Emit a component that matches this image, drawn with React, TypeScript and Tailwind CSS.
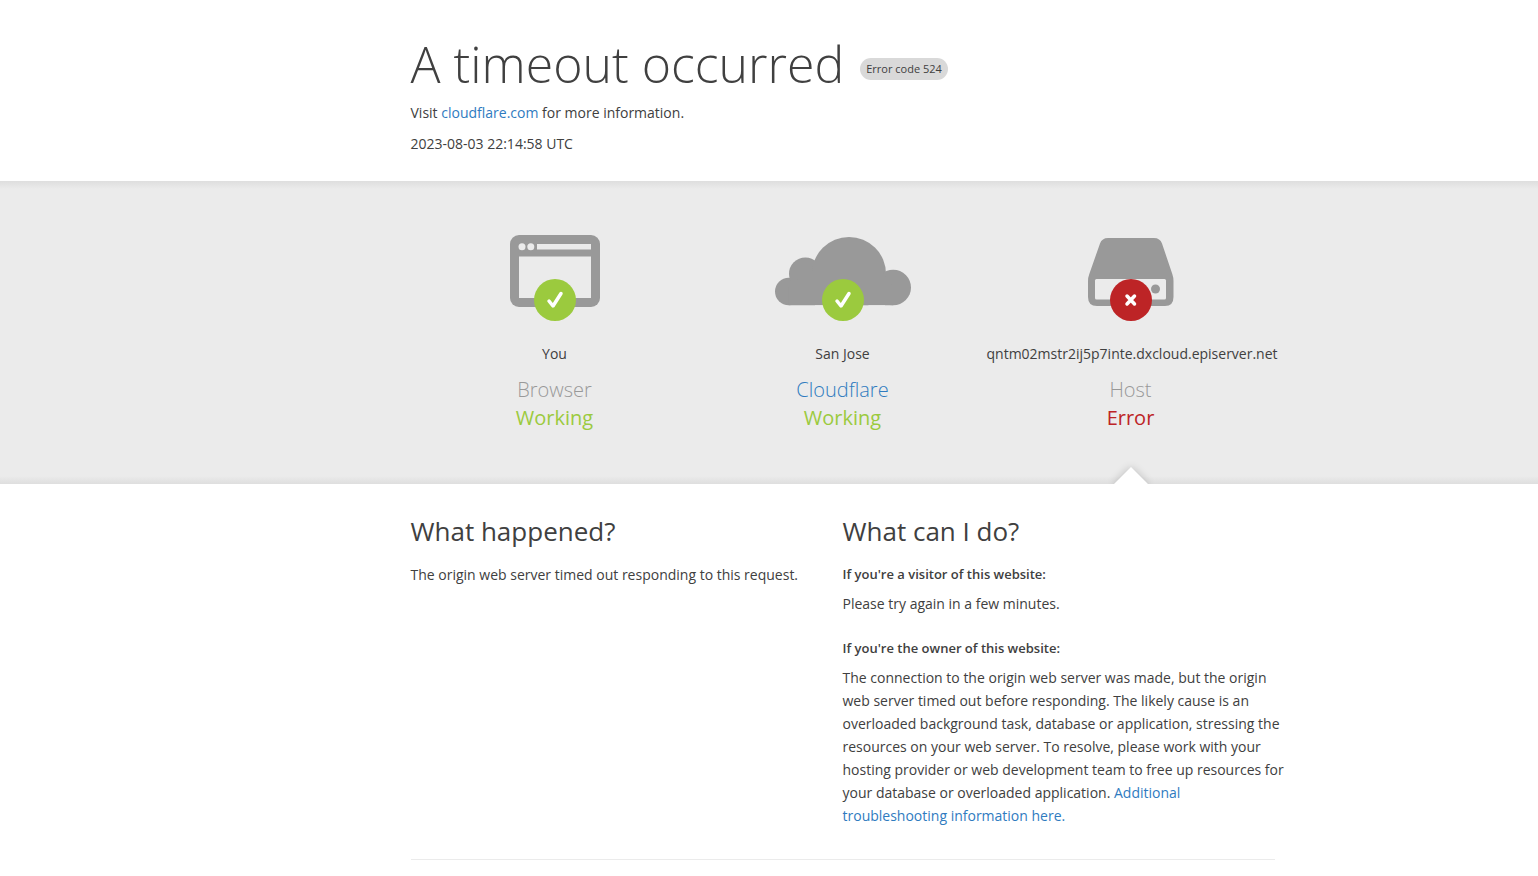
import type { ReactNode } from "react";
import { clsx } from "clsx";

function BrowserIcon() {
  return (
    <svg width="90" height="72" viewBox="0 0 90 72" aria-hidden="true">
      <rect width="90" height="72" rx="9" fill="#999" />
      <rect x="9" y="21.500" width="72" height="41.500" fill="#ebebeb" />
      <rect x="27" y="9" width="54" height="5.500" fill="#ebebeb" />
      <circle cx="12" cy="11.700" r="3.500" fill="#ebebeb" />
      <circle cx="20.800" cy="11.700" r="3.500" fill="#ebebeb" />
    </svg>
  );
}

function CloudIcon() {
  return (
    <svg width="136" height="70" viewBox="0 -1 136 70" fill="#999" aria-hidden="true">
      <circle cx="13.800" cy="54.500" r="13.800" />
      <circle cx="30.400" cy="36.800" r="16.400" />
      <circle cx="74" cy="37" r="37" />
      <circle cx="118.200" cy="50.500" r="17.800" />
      <path d="M13.800 68.300 V50 L30 36 H108 L118.200 50 V68.300 Z" />
      <rect x="40" y="68.300" width="70" height="10" fill="#ebebeb" />
    </svg>
  );
}

function HostIcon() {
  return (
    <svg width="86" height="70" viewBox="0 -2 86 70" aria-hidden="true">
      <path
        d="M20 0 H66 Q72 0 74 5.500 L84.300 36 Q85.500 39.500 85.500 43 V59 Q85.500 68 77 68 H9 Q0 68 0 59 V43 Q0 39.500 1.300 36 L12 5.500 Q14 0 20 0 Z"
        fill="#999"
      />
      <rect x="7" y="41" width="71" height="20.500" rx="1.500" fill="#ebebeb" />
      <circle cx="67.500" cy="51" r="4.500" fill="#999" />
    </svg>
  );
}

function StatusBadge({ ok }: { ok: boolean }) {
  return (
    <svg
      className="absolute left-1/2 -bottom-3.5 -translate-x-1/2"
      width="42"
      height="42"
      viewBox="0 0 42 42"
      aria-hidden="true"
    >
      <circle cx="21" cy="21" r="21" fill={ok ? "#9bca3e" : "#bd2426"} />
      {ok ? (
        <path d="M15 22 L19 27 L27 14.500" fill="none" stroke="#fff" strokeWidth="3.500" strokeLinecap="round" strokeLinejoin="round" />
      ) : (
        <path d="M17 17 L24.500 25 M24.500 17 L17 25" fill="none" stroke="#fff" strokeWidth="3.500" strokeLinecap="round" />
      )}
    </svg>
  );
}

type StatusProps = {
  icon: ReactNode;
  name: string;
  title: ReactNode;
  ok: boolean;
};

function Status({ icon, name, title, ok }: StatusProps) {
  return (
    <div className="relative text-center pt-[54px] pb-[52px]">
      <div className="relative h-[72px] mb-[35px] flex items-center justify-center">
        {icon}
        <StatusBadge ok={ok} />
      </div>
      <span className="block text-sm leading-6 whitespace-nowrap">{name}</span>
      <h3 className="mt-2.5 text-xl leading-7 font-light text-[#999]">{title}</h3>
      <span className={clsx("block text-xl leading-7", ok ? "text-[#9bca3e]" : "text-[#bd2426]")}>
        {ok ? "Working" : "Error"}
      </span>
      {/* Arrow pointing at the failing part */}
      {!ok && (
        <div className="absolute left-1/2 bottom-0 h-6 w-14 -translate-x-1/2 overflow-hidden">
          <div className="absolute left-1/2 top-3 size-6 -translate-x-1/2 rotate-45 bg-white shadow-[0_0_8px_rgba(0,0,0,0.2)]"></div>
        </div>
      )}
    </div>
  );
}

export default function App() {
  return (
    <div className="min-h-screen bg-white text-[#404040] text-sm font-['Open_Sans',sans-serif]">
      {/* Header */}
      <header className="lg:pl-[147px] pt-[34px] pb-[26px]">
        <div className="max-w-[864px] mx-auto">
          <div className="flex flex-wrap items-start gap-4">
            <h1 className="text-[50px] leading-[60px] font-light">A timeout occurred</h1>
            <span className="mt-6 rounded-full bg-[#d9d9d9] px-1.5 text-[11px] leading-[22px]">Error code 524</span>
          </div>
          <div className="mt-[7px] leading-[23px]">
            Visit <a href="https://www.cloudflare.com/" className="text-[#2f7bbf]">cloudflare.com</a> for more information.
          </div>
          <div className="mt-2 leading-[23px]">2023-08-03 22:14:58 UTC</div>
        </div>
      </header>

      {/* Connection status */}
      <section className="lg:pl-[147px] bg-[#ebebeb] bg-[linear-gradient(to_bottom,#dedede,#ebebeb_8px,#ebebeb_calc(100%-8px),#dedede)]">
        <div className="max-w-[864px] mx-auto grid md:grid-cols-3">
          <Status icon={<BrowserIcon />} name="You" title="Browser" ok />
          <Status
            icon={<CloudIcon />}
            name="San Jose"
            title={<a href="https://www.cloudflare.com/" className="text-[#2f7bbf]">Cloudflare</a>}
            ok
          />
          <Status icon={<HostIcon />} name="qntm02mstr2ij5p7inte.dxcloud.episerver.net" title="Host" ok={false} />
        </div>
      </section>

      {/* Explanation */}
      <main className="lg:pl-[147px]">
        <div className="max-w-[864px] mx-auto grid md:grid-cols-2 pt-[27px] pb-8 border-b border-[#ebebeb]">
          <div>
            <h2 className="text-[26px] leading-10">What happened?</h2>
            <p className="mt-3 leading-[23px]">The origin web server timed out responding to this request.</p>
          </div>
          <div className="lg:-mr-3">
            <h2 className="text-[26px] leading-10">What can I do?</h2>
            <h3 className="mt-3 text-[13px] leading-[23px] font-semibold">If you're a visitor of this website:</h3>
            <p className="mt-1.5 mb-[22px] leading-[23px]">Please try again in a few minutes.</p>
            <h3 className="text-[13px] leading-[23px] font-semibold">If you're the owner of this website:</h3>
            <p className="mt-1.5 leading-[23px]">
              The connection to the origin web server was made, but the origin web server timed out before responding. The likely cause is an overloaded background task, database or application, stressing the resources on your web server. To resolve, please work with your hosting provider or web development team to free up resources for your database or overloaded application.{" "}
              <a href="https://support.cloudflare.com/" className="text-[#2f7bbf]">Additional troubleshooting information here.</a>
            </p>
          </div>
        </div>
      </main>
    </div>
  );
}
